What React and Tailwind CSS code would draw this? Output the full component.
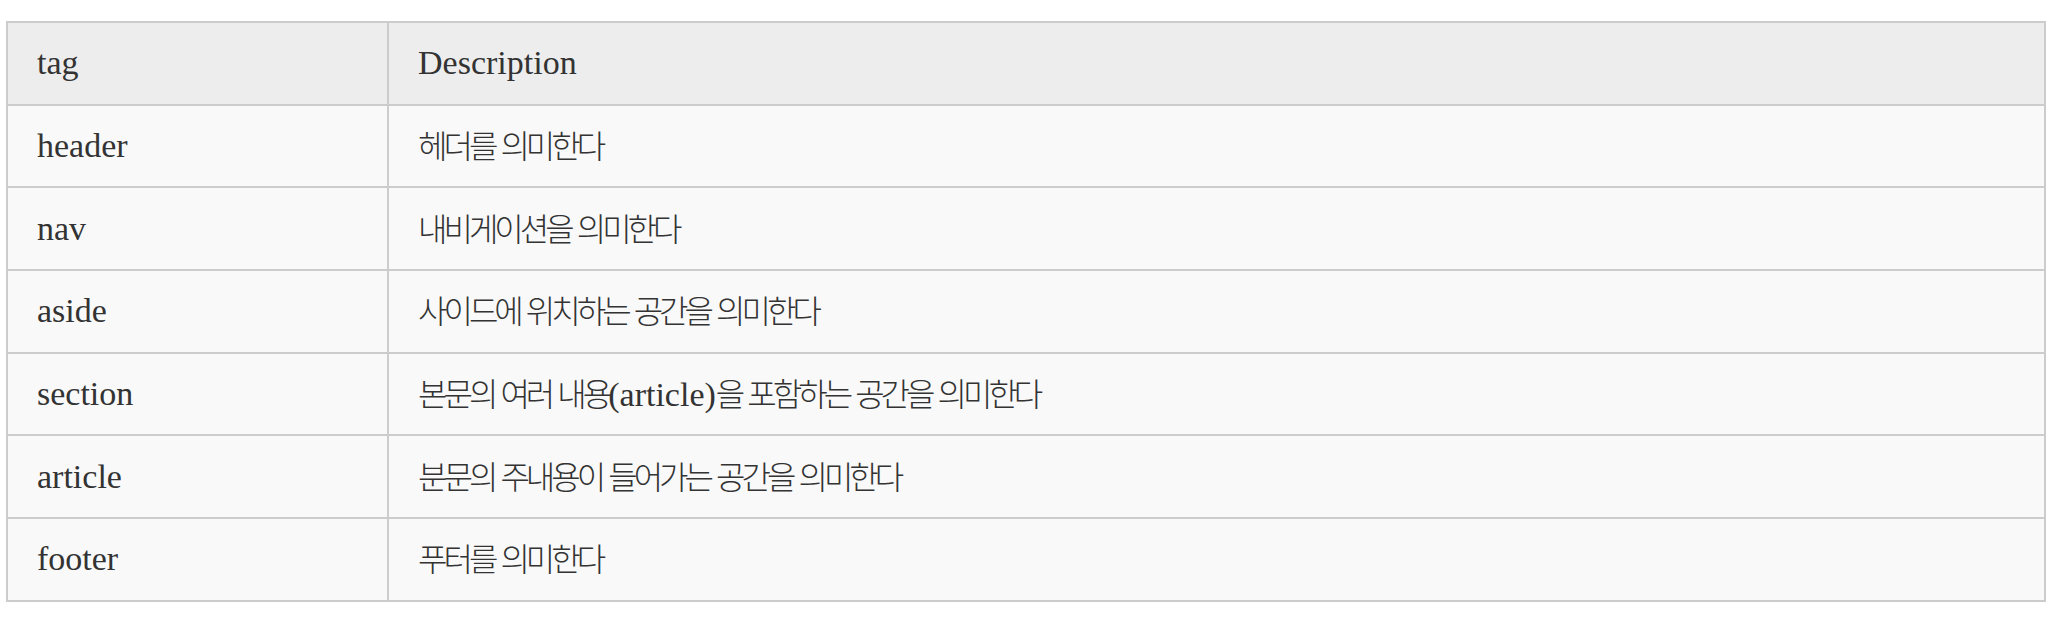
import React from "react";

const rows = [
  ["header", [["k", "헤더를 의미한다"]]],
  ["nav", [["k", "내비게이션을 의미한다"]]],
  ["aside", [["k", "사이드에 위치하는 공간을 의미한다"]]],
  ["section", [["k", "본문의 여러 내용"], ["l", "(article)"], ["k", "을 포함하는 공간을 의미한다"]]],
  ["article", [["k", "분문의 주내용이 들어가는 공간을 의미한다"]]],
  ["footer", [["k", "푸터를 의미한다"]]],
];

function Desc({ parts }) {
  return (
    <>
      {parts.map(([t, s], i) =>
        t === "k" ? (
          <span
            key={i}
            className="text-[32px] tracking-[-4px] [word-spacing:3px] font-light [font-family:'Noto_Sans_CJK_KR',sans-serif]"
          >
            {s}
          </span>
        ) : (
          <span key={i}>{s}</span>
        )
      )}
    </>
  );
}

export default function App() {
  return (
    <div className="bg-white w-[2064px] h-[620px] pl-[6px] pt-[21px]">
      <table className="w-[2040px] border-collapse border-2 border-[#cccccc] text-[34px] text-[#333333] [font-family:'Liberation_Serif',serif] leading-none">
        <thead>
          <tr className="bg-[#ededed] h-[82.7px]">
            <th className="w-[381px] border-2 border-[#cccccc] px-[29px] text-left font-normal align-middle">
              tag
            </th>
            <th className="border-2 border-[#cccccc] px-[29px] text-left font-normal align-middle">
              Description
            </th>
          </tr>
        </thead>
        <tbody>
          {rows.map(([tag, parts]) => (
            <tr key={tag} className="bg-[#f9f9f9] h-[82.7px]">
              <td className="border-2 border-[#cccccc] px-[29px] align-middle">{tag}</td>
              <td className="border-2 border-[#cccccc] px-[29px] align-middle">
                <Desc parts={parts} />
              </td>
            </tr>
          ))}
        </tbody>
      </table>
    </div>
  );
}
